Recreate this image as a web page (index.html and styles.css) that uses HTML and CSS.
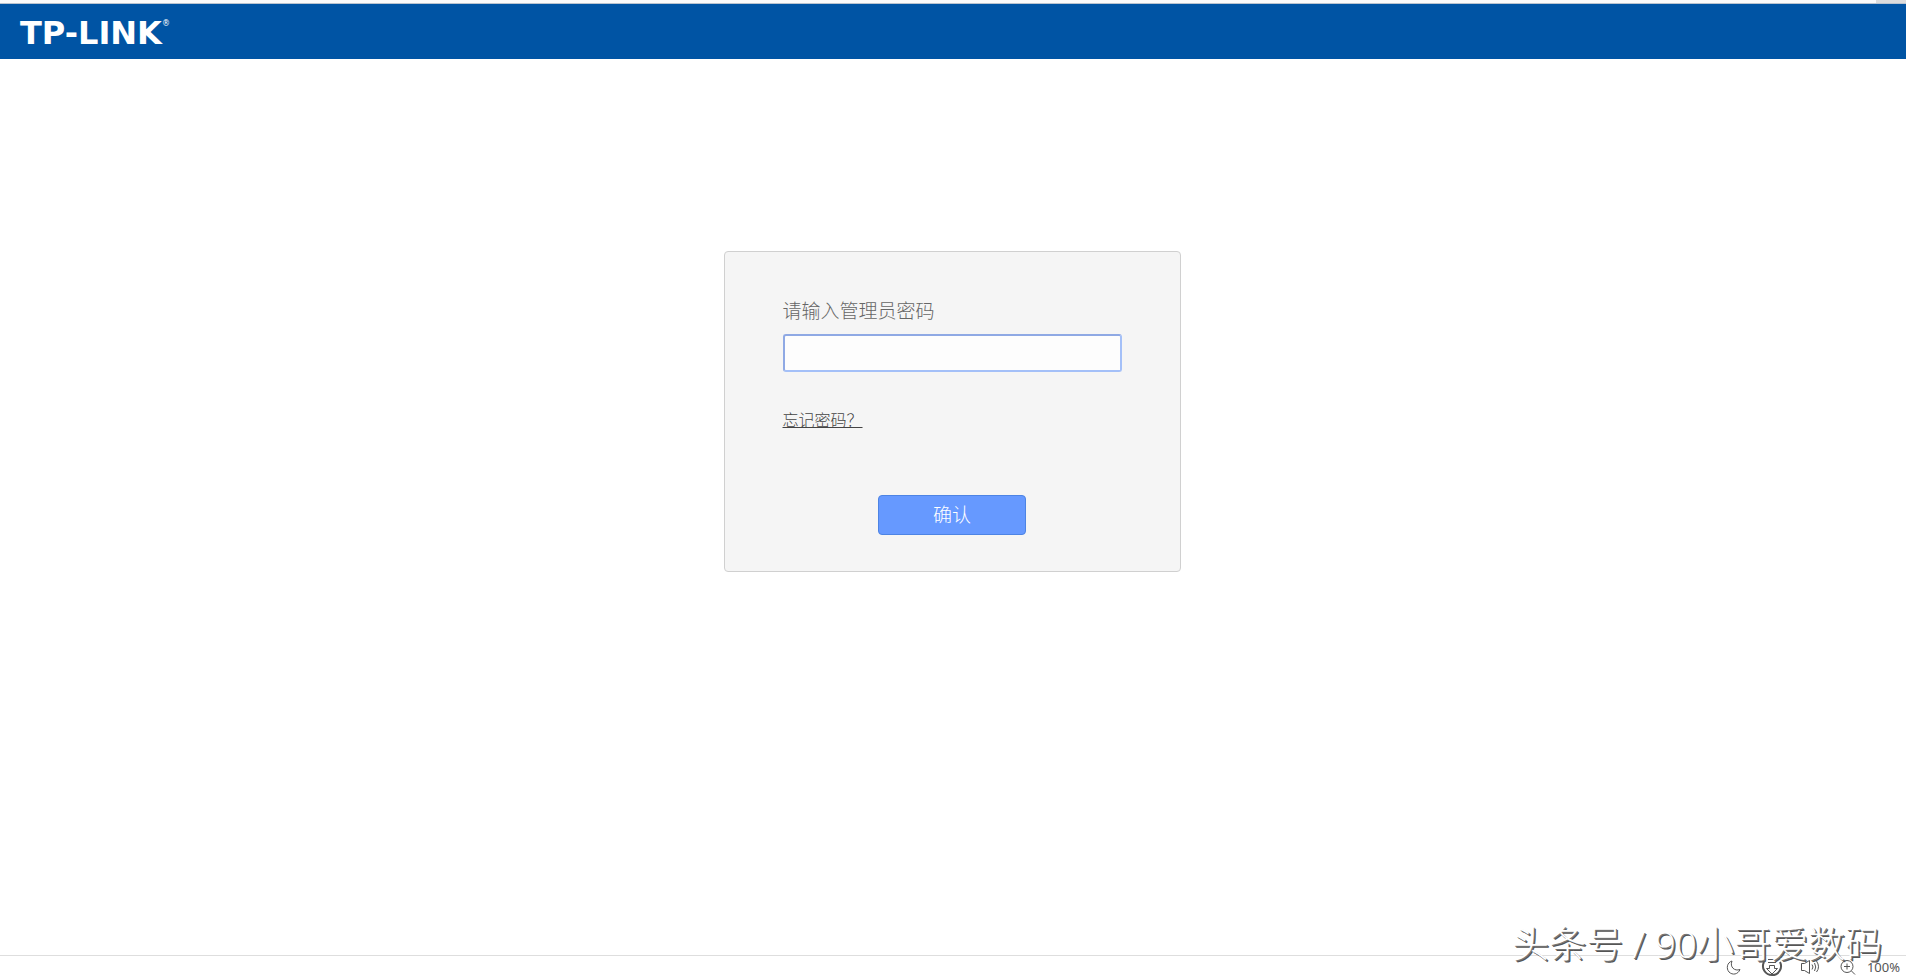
FILE: index.html
```html
<!DOCTYPE html>
<html lang="zh-CN">
<head>
    <meta charset="UTF-8">
    <meta name="viewport" content="width=device-width, initial-scale=1.0">
    <title>TP-LINK</title>
    <link rel="stylesheet" href="styles.css">
</head>
<body>

    <div class="top-strip"><span class="top-corner"></span></div>

    <header class="header">
        <div class="logo">TP-LINK<sup>®</sup></div>
    </header>

    <main class="content">
        <form class="login">
            <label for="password">请输入管理员密码</label>
            <input type="password" id="password" class="password">
            <a href="#" class="forget">忘记密码？</a>
            <button type="submit" class="confirm">确认</button>
        </form>
    </main>

    <!-- 底部状态栏 -->
    <footer class="status-bar">
        <svg class="icon" viewBox="0 0 22 22">
            <path d="M9 5 C4 6.500 3 12.500 6 16 C9.500 19.500 15 18.500 17 13.500 C11.500 15.500 6.500 11 9 5 Z"/>
        </svg>
        <svg class="icon icon-download" viewBox="0 0 22 22">
            <path class="ring" d="M3 6 A9 9 0 1 0 19 6"/>
            <path d="M7 3.500 H15 M7 6.500 H15 M8.500 9.500 H13.500 V12.500 H16.500 L11 18 L5.500 12.500 H8.500 Z"/>
        </svg>
        <svg class="icon" viewBox="0 0 22 22">
            <path d="M2.500 7.500 H5.500 L10.500 4.500 V17.500 L5.500 14.500 H2.500 Z M13 8.500 Q15 11 13 13.500 M15.500 7 Q18 11 15.500 15 M17.500 5 Q21.500 11 17.500 16"/>
        </svg>
        <svg class="icon" viewBox="0 0 22 22">
            <circle cx="10" cy="10.500" r="6"/>
            <path d="M7 10.500 H13 M10 7.500 V13.500 M14.500 15 L18 18.500"/>
        </svg>
        <span class="zoom">100%</span>
    </footer>

    <div class="watermark">头条号 / 90小哥爱数码</div>

</body>
</html>
```

FILE: styles.css
```css
* {
    box-sizing: border-box;
}
body {
    margin: 0;
    min-height: 100vh;
    display: flex;
    flex-direction: column;
    position: relative;
    background-color: #fff;
    color: #666;
    font-family: "Liberation Sans", "Noto Sans CJK SC", sans-serif;
}
.top-strip {
    display: flex;
    justify-content: flex-end;
    height: 4px;
    background-color: #fafafa;
    border-bottom: 1px solid #b9c3cf;
}
.top-corner {
    width: 30px;
    background-color: #dcdcdc;
}
.header {
    display: flex;
    align-items: center;
    height: 55px;
    padding: 2px 20px 0;
    background-color: #0054a4;
}
.logo {
    display: flex;
    color: #fff;
    font-family: "DejaVu Sans", sans-serif;
    font-size: 32px;
    font-weight: bold;
    line-height: 32px;
}
.logo sup {
    font-size: 8px;
    font-weight: normal;
    line-height: 14px;
}
.content {
    flex: 1;
    display: flex;
    justify-content: center;
    align-items: flex-start;
    padding: 192px 22px 40px 20px;
}
.login {
    display: flex;
    flex-direction: column;
    width: 457px;
    padding: 43px 58px 36px;
    background-color: #f5f5f5;
    border: 1px solid #d0d0d0;
    border-radius: 4px;
    font-family: "Noto Sans CJK SC", sans-serif;
    font-weight: 300;
}
.login label {
    font-size: 19px;
    line-height: 30px;
}
.password {
    width: 100%;
    height: 38px;
    margin: 9px 0 35px;
    padding: 0 10px;
    font-size: 18px;
    background-color: #fdfdfd;
    border: 2px solid #a4c0f8;
    border-top-color: #8fa9e4;
    border-left-color: #8fa9e4;
    border-radius: 3px;
    outline: none;
}
.forget {
    align-self: flex-start;
    color: #444;
    font-size: 16px;
    line-height: 24px;
}
.confirm {
    align-self: center;
    width: 148px;
    height: 40px;
    margin-top: 64px;
    padding: 0 0 3px;
    background-color: #6699ff;
    border: 1px solid #4d84e4;
    border-radius: 4px;
    color: #fff;
    font-family: inherit;
    font-size: 19px;
    font-weight: 300;
    cursor: pointer;
}
.confirm:hover {
    background-color: #5a8ff8;
}
.status-bar {
    display: flex;
    align-items: center;
    justify-content: flex-end;
    gap: 16px;
    height: 23px;
    padding-right: 6px;
    border-top: 1px solid #dedede;
}
.icon {
    width: 22px;
    height: 22px;
    fill: none;
    stroke: #555;
    stroke-width: 1;
}
.icon-download .ring {
    stroke-width: 2;
}
.zoom {
    margin-left: -8px;
    color: #555;
    font-family: "Noto Sans", sans-serif;
    font-size: 13px;
    line-height: 22px;
}
.watermark {
    position: absolute;
    right: 24px;
    bottom: 7px;
    color: #fff;
    font-family: "Open Sans", "Noto Sans CJK SC", sans-serif;
    font-size: 37px;
    font-weight: 300;
    line-height: 54px;
    text-shadow: 1px 1px 0 #777, 2px 2px 0 #555;
    pointer-events: none;
}
```
